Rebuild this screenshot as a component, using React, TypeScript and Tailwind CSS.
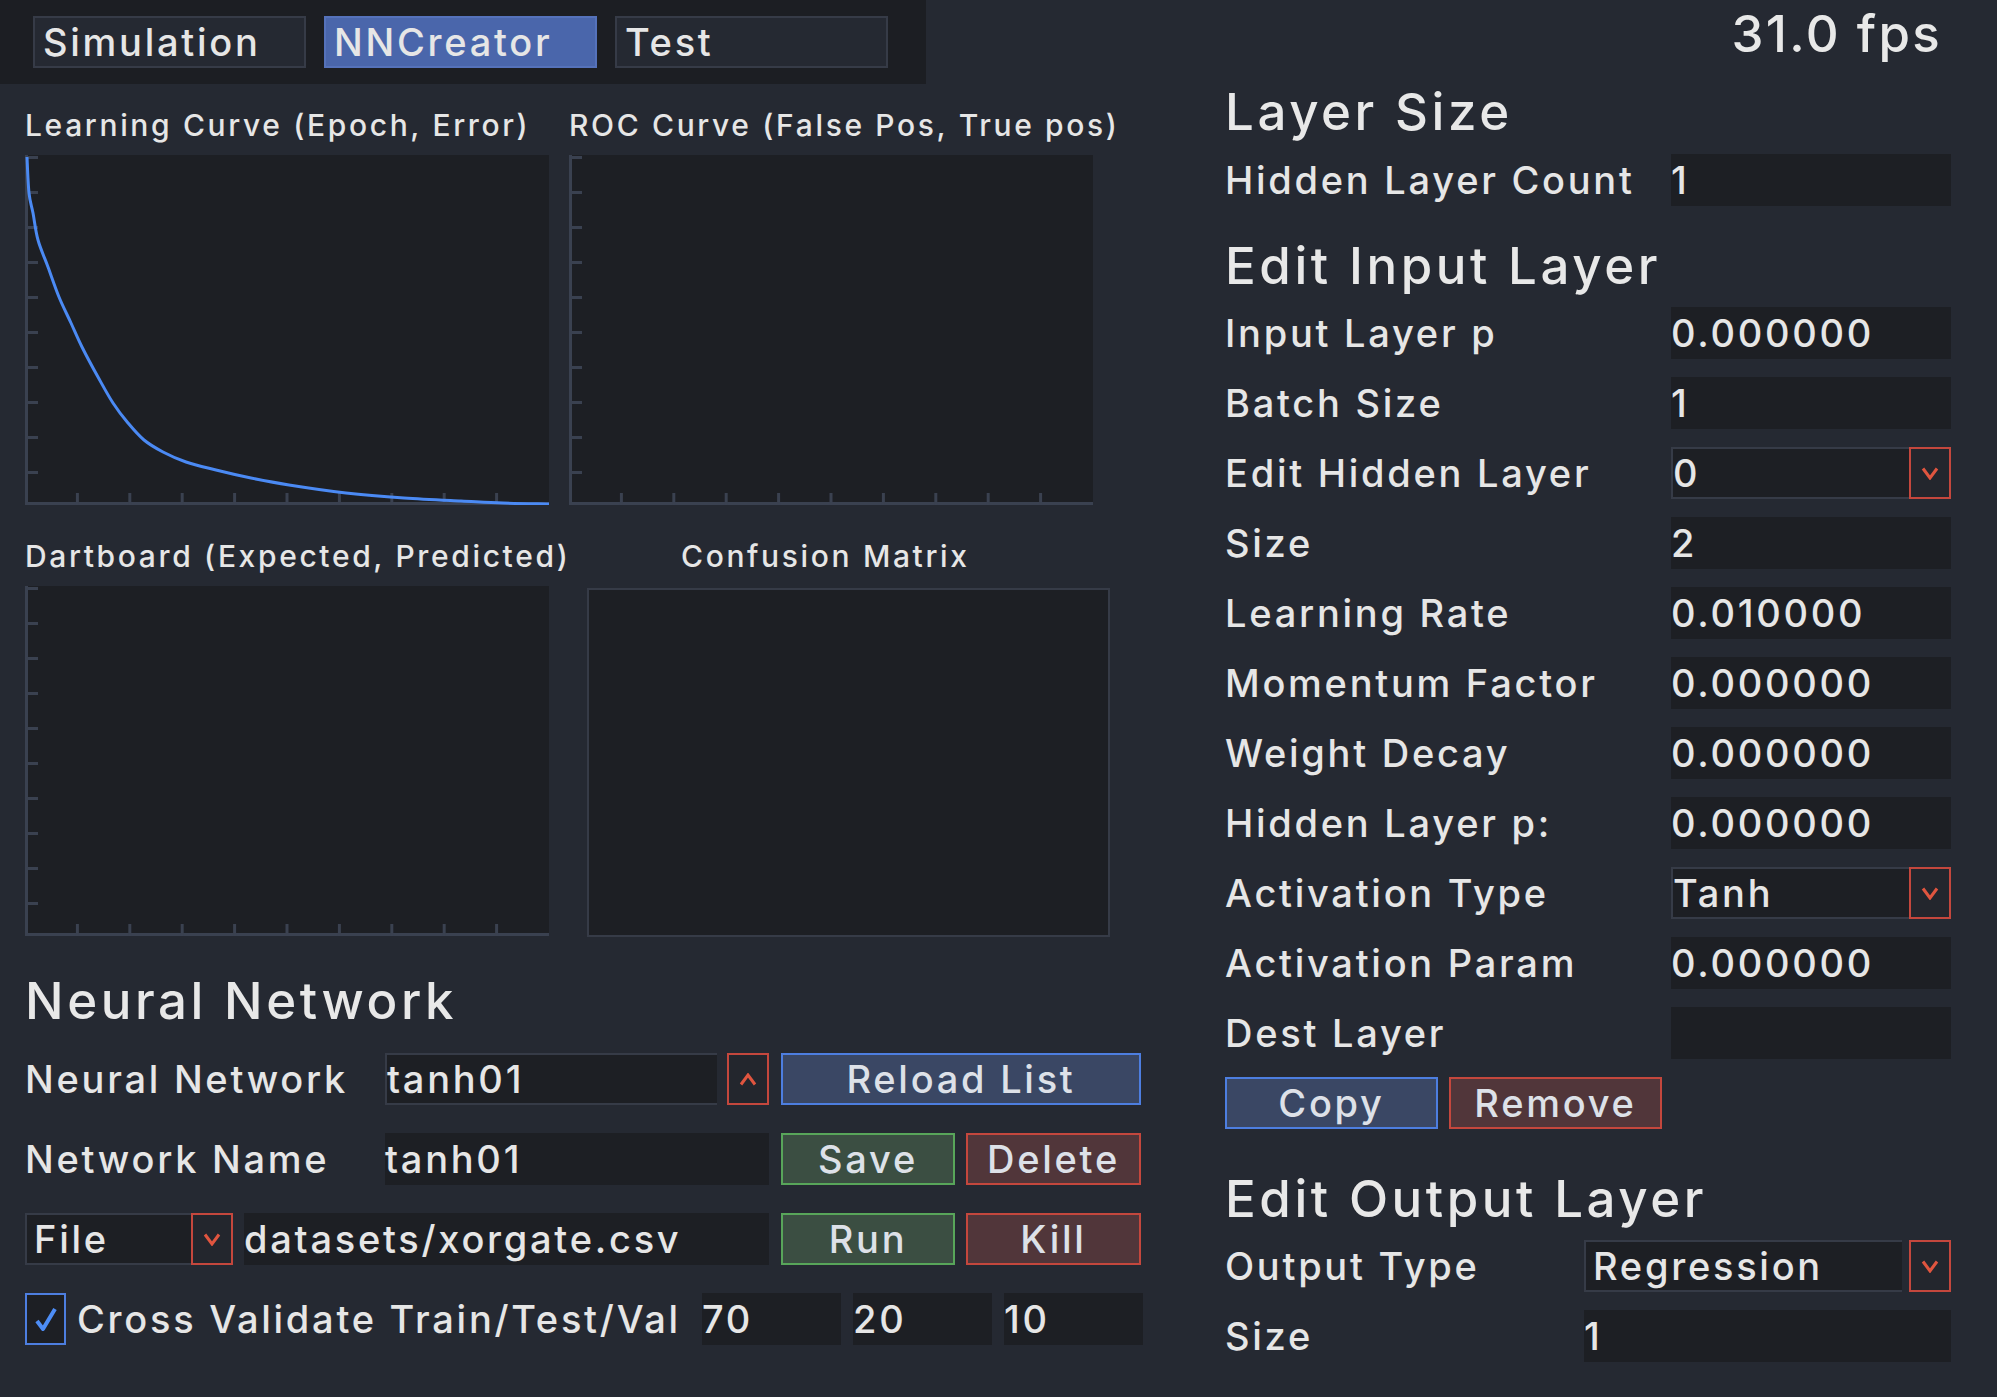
import React from "react";

// ImGui-ish NNCreator panel
const TXT = "text-[38px] font-medium tracking-[0.072em] text-[#e6e6e6] whitespace-nowrap";
const HEAD = "h-[50px] text-[51px] font-medium leading-[50px] tracking-[0.07em] text-[#e8e8e8] whitespace-nowrap";
const SMALL = "h-[30px] text-[30px] font-medium leading-[30px] tracking-[0.088em] text-[#e6e6e6] whitespace-nowrap";

// sampled from the learning curve (plot-local px)
const CURVE = [
  [0, 2], [2, 38], [6, 58], [11, 85], [21, 112], [32, 142], [44, 168], [55, 192], [71, 222],
  [86, 248], [101, 268], [117, 285], [136, 297], [159, 307], [189, 315], [224, 323], [262, 330],
  [319, 338], [377, 343], [434, 346], [476, 348], [524, 349],
];

// catmull-rom -> bezier so the curve doesn't look kinked
const curvePath = () => {
  const p = CURVE.map(([x, y]) => [x + 2, y]);
  let d = `M${p[0][0]},${p[0][1]}`;
  for (let i = 0; i < p.length - 1; i++) {
    const p0 = p[Math.max(0, i - 1)];
    const p1 = p[i];
    const p2 = p[i + 1];
    const p3 = p[Math.min(p.length - 1, i + 2)];
    const c1x = p1[0] + (p2[0] - p0[0]) / 6;
    const c1y = p1[1] + (p2[1] - p0[1]) / 6;
    const c2x = p2[0] - (p3[0] - p1[0]) / 6;
    const c2y = p2[1] - (p3[1] - p1[1]) / 6;
    d += ` C${c1x.toFixed(1)},${c1y.toFixed(1)} ${c2x.toFixed(1)},${c2y.toFixed(1)} ${p2[0]},${p2[1]}`;
  }
  return d;
};

const Chevron = ({ up }: { up?: boolean }) => (
  <svg width="18" height="13" viewBox="0 0 18 13" className="block">
    <polyline
      points={up ? "2,11.5 9,2 16,11.5" : "2,1.5 9,11 16,1.5"}
      fill="none"
      stroke="#e0553f"
      strokeWidth="3"
    />
  </svg>
);

const Field = ({ value, w }: { value: string; w: string }) => (
  <div className={`flex h-[52px] items-center bg-[#1d1f24] ${w} ${TXT}`}>{value}</div>
);

const ArrowBox = ({ up }: { up?: boolean }) => (
  <div className="flex h-[52px] w-[42px] shrink-0 items-center justify-center border-2 border-[#c4473d] bg-[#23262d]">
    <Chevron up={up} />
  </div>
);

const Combo = ({
  value,
  w,
  gap,
  pad,
  up,
}: {
  value: string;
  w: string;
  gap: string;
  pad?: boolean;
  up?: boolean;
}) => (
  <div className={`flex h-[52px] ${w} ${gap}`}>
    <div
      className={`flex flex-1 items-center border-2 border-r-0 border-[#363b47] bg-[#1d1f24] ${pad ? "pl-[7px]" : ""} ${TXT}`}
    >
      {value}
    </div>
    <ArrowBox up={up} />
  </div>
);

type Tone = "blue" | "green" | "red";
const TONES: Record<Tone, string> = {
  blue: "border-[#4d7ee0] bg-[#3a4764]",
  green: "border-[#58a55a] bg-[#3b4e42]",
  red: "border-[#c4473d] bg-[#51363a]",
};

const Btn = ({ label, tone, w }: { label: string; tone: Tone; w: string }) => (
  <div
    className={`flex h-[52px] shrink-0 items-center justify-center border-2 ${TONES[tone]} ${w} text-[38px] font-medium tracking-[0.072em] text-[#dde1e8]`}
  >
    {label}
  </div>
);

const Plot = ({ curve }: { curve?: boolean }) => (
  <div className="h-[350px] w-[524px] shrink-0 bg-[#1d1f24]">
    <svg width="524" height="350" viewBox="0 0 524 350" className="block">
      <line x1="1.5" y1="0" x2="1.5" y2="350" stroke="#3a4150" strokeWidth="3" />
      <line x1="0" y1="348.5" x2="524" y2="348.5" stroke="#3a4150" strokeWidth="3" />
      {Array.from({ length: 10 }).map((_, i) => (
        <line key={`y${i}`} x1="0" y1={2.5 + 35 * i} x2="13" y2={2.5 + 35 * i} stroke="#3a4150" strokeWidth="3" />
      ))}
      {Array.from({ length: 9 }).map((_, i) => (
        <line
          key={`x${i}`}
          x1={52.4 * (i + 1)}
          y1="338"
          x2={52.4 * (i + 1)}
          y2="350"
          stroke="#3a4150"
          strokeWidth="3"
        />
      ))}
      {curve && <path d={curvePath()} fill="none" stroke="#4b8af4" strokeWidth="3" strokeLinejoin="round" />}
    </svg>
  </div>
);

const Row = ({ label, lw, children }: { label: string; lw: string; children: React.ReactNode }) => (
  <div className="flex h-[52px] items-center">
    <div className={`${lw} shrink-0 ${TXT}`}>{label}</div>
    {children}
  </div>
);

const App = () => {
  return (
    <div className="flex min-h-screen w-full bg-[#252932] [font-family:Inter,'Noto_Sans',sans-serif]">
      {/* Left side */}
      <div className="flex w-[1160px] shrink-0 flex-col">
        {/* Tabs */}
        <div className="flex h-[84px] w-[926px] items-center gap-[18px] bg-[#1c1e23] pl-[33px]">
          <div className={`flex h-[52px] w-[273px] items-center border-2 border-[#363b47] bg-[#252932] pl-[8px] ${TXT}`}>
            Simulation
          </div>
          <div className={`flex h-[52px] w-[273px] items-center border-2 border-[#5572ba] bg-[#4a66ab] pl-[8px] ${TXT}`}>
            NNCreator
          </div>
          <div className={`flex h-[52px] w-[273px] items-center border-2 border-[#363b47] bg-[#252932] pl-[8px] ${TXT}`}>
            Test
          </div>
        </div>

        {/* Plots row 1 */}
        <div className="mt-[26px] flex gap-[20px] pl-[25px]">
          <div className={`w-[524px] ${SMALL}`}>Learning Curve (Epoch, Error)</div>
          <div className={`w-[524px] ${SMALL}`}>ROC Curve (False Pos, True pos)</div>
        </div>
        <div className="mt-[15px] flex gap-[20px] pl-[25px]">
          <Plot curve />
          <Plot />
        </div>

        {/* Plots row 2 */}
        <div className="mt-[36px] flex gap-[38px] pl-[25px]">
          <div className={`w-[524px] ${SMALL}`}>Dartboard (Expected, Predicted)</div>
          <div className={`w-[523px] pl-[94px] ${SMALL}`}>Confusion Matrix</div>
        </div>
        <div className="mt-[15px] flex items-start gap-[38px] pl-[25px]">
          <Plot />
          <div className="mt-[2px] h-[349px] w-[523px] border-2 border-[#363b47] bg-[#1d1f24]" />
        </div>

        {/* Neural Network */}
        <div className={`mt-[39px] pl-[25px] ${HEAD}`}>Neural Network</div>
        <div className="mt-[27px] flex flex-col gap-[28px] pl-[25px]">
          <Row label="Neural Network" lw="w-[360px]">
            <Combo value="tanh01" w="w-[384px]" gap="gap-[10px]" up />
            <div className="ml-[12px]">
              <Btn label="Reload List" tone="blue" w="w-[360px]" />
            </div>
          </Row>
          <Row label="Network Name" lw="w-[360px]">
            <Field value="tanh01" w="w-[384px]" />
            <div className="ml-[12px] flex gap-[11px]">
              <Btn label="Save" tone="green" w="w-[174px]" />
              <Btn label="Delete" tone="red" w="w-[175px]" />
            </div>
          </Row>
          <div className="flex h-[52px] items-center">
            <Combo value="File" w="w-[208px]" gap="gap-0" pad />
            <div className="ml-[11px]">
              <Field value="datasets/xorgate.csv" w="w-[525px]" />
            </div>
            <div className="ml-[12px] flex gap-[11px]">
              <Btn label="Run" tone="green" w="w-[174px]" />
              <Btn label="Kill" tone="red" w="w-[175px]" />
            </div>
          </div>
          <div className="flex h-[52px] items-center">
            <div className="flex h-[52px] w-[41px] shrink-0 items-center justify-center border-2 border-[#4d7ee0] bg-[#1d1f24]">
              <svg width="24" height="26" viewBox="0 0 24 26">
                <path d="M3 15 L9 23 L21 3" fill="none" stroke="#4d8df6" strokeWidth="4" strokeLinejoin="round" />
              </svg>
            </div>
            <div className={`ml-[11px] w-[625px] shrink-0 ${TXT}`}>Cross Validate Train/Test/Val</div>
            <div className="flex gap-[12px]">
              <Field value="70" w="w-[139px]" />
              <Field value="20" w="w-[139px]" />
              <Field value="10" w="w-[139px]" />
            </div>
          </div>
        </div>
      </div>

      {/* Right side */}
      <div className="ml-[65px] flex w-[726px] shrink-0 flex-col">
        <div className="mt-[9px] h-[50px] pr-[9px] text-right text-[51px] font-medium leading-[50px] tracking-[0.045em] text-[#e8e8e8]">
          31.0 fps
        </div>
        <div className={`mt-[28px] ${HEAD}`}>Layer Size</div>
        <div className="mt-[17px]">
          <Row label="Hidden Layer Count" lw="w-[446px]">
            <Field value="1" w="w-[280px]" />
          </Row>
        </div>

        <div className={`mt-[35px] ${HEAD}`}>Edit Input Layer</div>
        <div className="mt-[16px] flex flex-col gap-[18px]">
          <Row label="Input Layer p" lw="w-[446px]">
            <Field value="0.000000" w="w-[280px]" />
          </Row>
          <Row label="Batch Size" lw="w-[446px]">
            <Field value="1" w="w-[280px]" />
          </Row>
          <Row label="Edit Hidden Layer" lw="w-[446px]">
            <Combo value="0" w="w-[280px]" gap="gap-0" />
          </Row>
          <Row label="Size" lw="w-[446px]">
            <Field value="2" w="w-[280px]" />
          </Row>
          <Row label="Learning Rate" lw="w-[446px]">
            <Field value="0.010000" w="w-[280px]" />
          </Row>
          <Row label="Momentum Factor" lw="w-[446px]">
            <Field value="0.000000" w="w-[280px]" />
          </Row>
          <Row label="Weight Decay" lw="w-[446px]">
            <Field value="0.000000" w="w-[280px]" />
          </Row>
          <Row label="Hidden Layer p:" lw="w-[446px]">
            <Field value="0.000000" w="w-[280px]" />
          </Row>
          <Row label="Activation Type" lw="w-[446px]">
            <Combo value="Tanh" w="w-[280px]" gap="gap-0" />
          </Row>
          <Row label="Activation Param" lw="w-[446px]">
            <Field value="0.000000" w="w-[280px]" />
          </Row>
          <Row label="Dest Layer" lw="w-[446px]">
            <Field value="" w="w-[280px]" />
          </Row>
          <div className="flex gap-[11px]">
            <Btn label="Copy" tone="blue" w="w-[213px]" />
            <Btn label="Remove" tone="red" w="w-[213px]" />
          </div>
        </div>

        <div className={`mt-[45px] ${HEAD}`}>Edit Output Layer</div>
        <div className="mt-[16px] flex flex-col gap-[18px]">
          <Row label="Output Type" lw="w-[359px]">
            <Combo value="Regression" w="w-[367px]" gap="gap-[7px]" pad />
          </Row>
          <Row label="Size" lw="w-[359px]">
            <Field value="1" w="w-[367px]" />
          </Row>
        </div>
      </div>
    </div>
  );
};

export default App;
